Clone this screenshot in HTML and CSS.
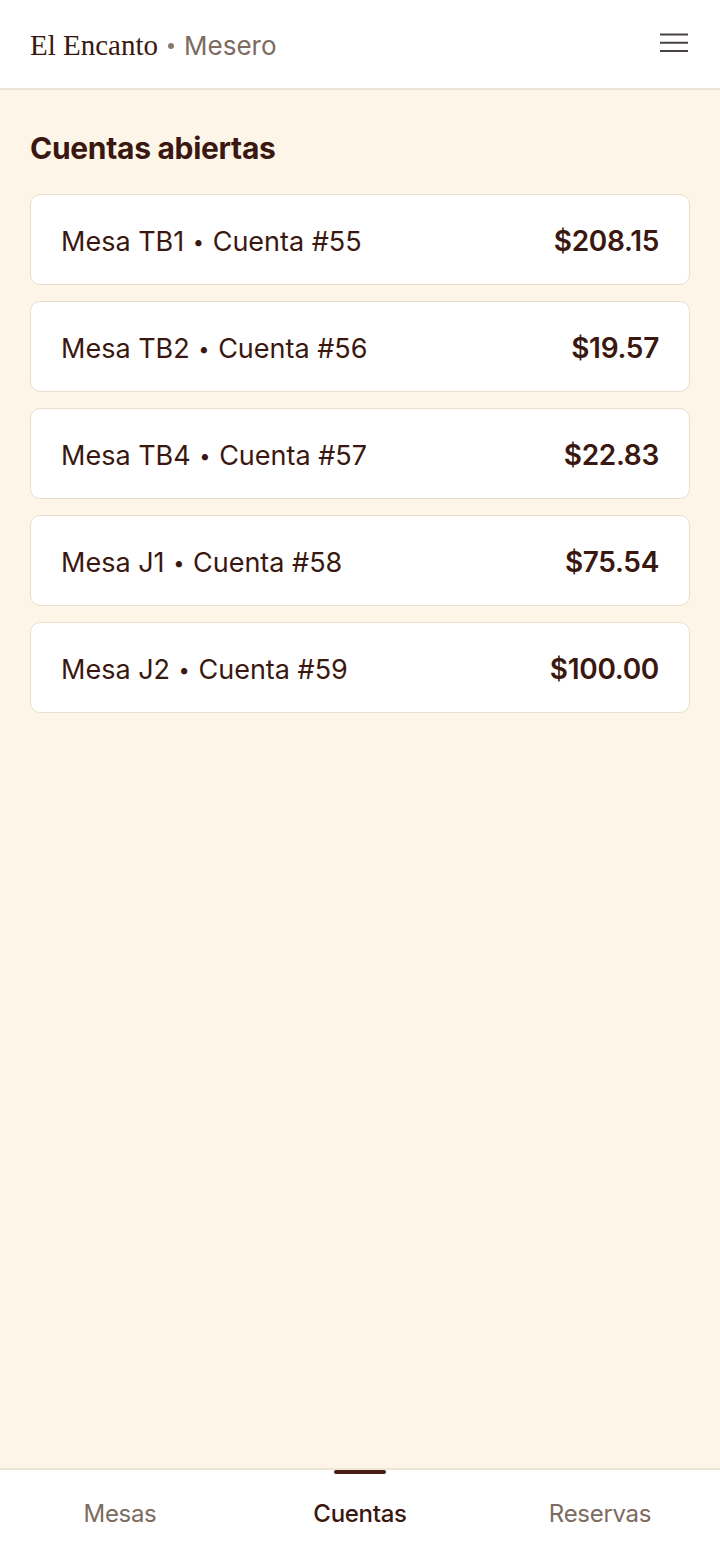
FILE: index.html
```html
<html>
<head>
  <link rel="stylesheet" href="styles.css">
</head>
<body>
  <div class="app">
    <header class="topbar">
      <div class="brand">
        <span class="brand-name">El Encanto</span>
        <span class="brand-dot"></span>
        <span class="brand-role">Mesero</span>
      </div>
      <button class="menu-btn" aria-label="Menú">
        <svg width="28" height="20" viewBox="0 0 28 20">
          <path d="M0 1.5h28M0 9.8h28M0 18.1h28" stroke="#4a4240" stroke-width="2" fill="none"/>
        </svg>
      </button>
    </header>

    <main class="content">
      <h1 class="page-title">Cuentas abiertas</h1>
      <div class="bill-list">
        <div class="bill">
          <span class="bill-name">Mesa TB1 <span class="sep">•</span> Cuenta #55</span>
          <span class="bill-total">$208.15</span>
        </div>
        <div class="bill">
          <span class="bill-name">Mesa TB2 <span class="sep">•</span> Cuenta #56</span>
          <span class="bill-total">$19.57</span>
        </div>
        <div class="bill">
          <span class="bill-name">Mesa TB4 <span class="sep">•</span> Cuenta #57</span>
          <span class="bill-total">$22.83</span>
        </div>
        <div class="bill">
          <span class="bill-name">Mesa J1 <span class="sep">•</span> Cuenta #58</span>
          <span class="bill-total">$75.54</span>
        </div>
        <div class="bill">
          <span class="bill-name">Mesa J2 <span class="sep">•</span> Cuenta #59</span>
          <span class="bill-total">$100.00</span>
        </div>
      </div>
    </main>

    <nav class="tabbar">
      <a class="tab">Mesas</a>
      <a class="tab active">Cuentas</a>
      <a class="tab">Reservas</a>
    </nav>
  </div>
</body>
</html>
```

FILE: styles.css
```css
body {
  margin: 0;
  font-family: Inter, "Noto Sans", sans-serif;
  color: #3a1810;
  background-color: #fdf5e8;
}

.app {
  display: flex;
  flex-direction: column;
  height: 1558px;
}

.topbar {
  height: 88px;
  display: flex;
  align-items: center;
  justify-content: space-between;
  padding: 0 32px 0 30px;
  background-color: #ffffff;
  border-bottom: 2px solid #ede5d6;
}

.brand {
  display: flex;
  align-items: center;
  padding-top: 2px;
}

.brand-name {
  font-family: "Liberation Serif", serif;
  font-size: 29px;
  color: #3a1810;
}

.brand-dot {
  width: 6px;
  height: 6px;
  margin: 2px 10px 0 10px;
  border-radius: 50%;
  background-color: #8a7a6e;
}

.brand-role {
  font-size: 26px;
  color: #7d6b5f;
}

.menu-btn {
  border: none;
  background: none;
  padding: 0;
  margin-top: -2px;
  display: flex;
}

.content {
  flex: 1;
  padding: 40px 30px;
}

.page-title {
  margin: 0 0 28px 0;
  font-size: 30px;
  font-weight: 700;
  letter-spacing: -0.3px;
}

.bill-list {
  display: flex;
  flex-direction: column;
  gap: 16px;
}

.bill {
  height: 89px;
  box-sizing: content-box;
  display: flex;
  align-items: center;
  justify-content: space-between;
  padding: 0 30px;
  background-color: #ffffff;
  border: 1px solid #e9dfcc;
  border-radius: 10px;
}

.bill-name {
  font-size: 27px;
  padding-top: 3px;
}

.sep {
  font-size: 20px;
  vertical-align: 2px;
  margin: 0 1px;
}

.bill-total {
  font-size: 28px;
  font-weight: 600;
  letter-spacing: -0.3px;
  padding-top: 3px;
}

.tabbar {
  height: 88px;
  display: flex;
  background-color: #ffffff;
  border-top: 2px solid #ede5d6;
}

.tab {
  flex: 1;
  position: relative;
  display: flex;
  align-items: center;
  justify-content: center;
  padding-bottom: 2px;
  font-size: 24px;
  color: #7d6b5f;
  letter-spacing: -0.3px;
}

.tab.active {
  color: #3a1810;
  font-weight: 500;
}

.tab.active::before {
  content: "";
  position: absolute;
  top: 0;
  left: 50%;
  width: 52px;
  height: 4px;
  margin-left: -26px;
  border-radius: 2px;
  background-color: #4a1e12;
}
```
